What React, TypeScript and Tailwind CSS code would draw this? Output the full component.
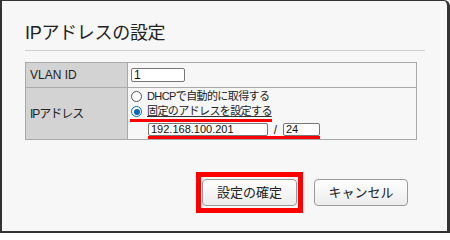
const FONT = "font-['Liberation_Sans','Noto_Sans_CJK_JP',sans-serif]";

function Radio({ checked }: { checked?: boolean }) {
  return checked ? (
    <span className="w-[11px] h-[11px] rounded-full border border-[#0067c0] bg-white flex items-center justify-center shrink-0">
      <span className="w-[6px] h-[6px] rounded-full bg-[#0067c0]" />
    </span>
  ) : (
    <span className="w-[11px] h-[11px] rounded-full border border-[#555] bg-white shrink-0" />
  );
}

function Field({ value, className }: { value: string; className: string }) {
  return (
    <div
      className={`h-[13px] bg-white border border-[#777] rounded-[2px] flex items-center pl-[2px] text-[11px] leading-none text-[#111] ${className}`}
    >
      {value}
    </div>
  );
}

export default function App() {
  return (
    <div className={`w-[450px] h-[233px] bg-white ${FONT}`}>
      <div className="w-full h-full bg-[#f7f7f7] border-t border-l-2 border-r-[3px] border-b-2 border-[#333] rounded-tr-[6px] pt-[22px] pl-[23px] pr-[22px]">
        {/* Title */}
        <div className="border-b border-[#cfcfcf] pb-[6px]">
          <h1 className="text-[18px] leading-[21px] text-[#222] tracking-[-0.3px]">IPアドレスの設定</h1>
        </div>

        {/* Settings table */}
        <div className="w-[392px] mt-[11px] border border-[#a9a9a9] text-[11px] text-[#222]">
          <div className="flex h-[25px] border-b border-[#a9a9a9]">
            <div className="w-[102px] bg-[#d3d3d3] border-r border-[#a9a9a9] flex items-center pl-[4px] text-[12px]">
              VLAN ID
            </div>
            <div className="flex items-center pl-[3px]">
              <Field value="1" className="w-[54px] h-[14px] text-[12px]" />
            </div>
          </div>
          <div className="flex h-[51px]">
            <div className="w-[102px] bg-[#d3d3d3] border-r border-[#a9a9a9] flex items-center pl-[4px] text-[12px] tracking-[-1px]">
              IPアドレス
            </div>
            <div className="flex flex-col items-start pl-[2px] tracking-[-0.6px]">
              <label className="flex items-center gap-[5px] h-[16px] pl-[1px]">
                <Radio />
                <span>DHCPで自動的に取得する</span>
              </label>
              <label className="flex items-center gap-[5px] h-[18px] pl-[1px] border-b-[3px] border-[#ff0000] underline decoration-[#333] underline-offset-[1px]">
                <Radio checked />
                <span>固定のアドレスを設定する</span>
              </label>
              <div className="ml-[18px] mt-[1px] flex items-center border-b-[3px] border-[#ff0000] tracking-normal">
                <Field value="192.168.100.201" className="w-[120px]" />
                <span className="w-[15px] text-center text-[12px] leading-none">/</span>
                <Field value="24" className="w-[37px]" />
              </div>
            </div>
          </div>
        </div>

        {/* Buttons */}
        <div className="flex justify-end items-center gap-[11px] mt-[32px] mr-[17px]">
          <div className="border-[5px] border-[#ff0000] px-[1px] py-[2px]">
            <button className="w-[95px] h-[27px] rounded-[4px] border border-[#9a9a9a] bg-gradient-to-b from-white to-[#ececec] text-[13px] text-[#222]">
              設定の確定
            </button>
          </div>
          <button className="w-[94px] h-[27px] rounded-[4px] border border-[#9a9a9a] bg-gradient-to-b from-white to-[#ececec] text-[13px] text-[#222]">
            キャンセル
          </button>
        </div>
      </div>
    </div>
  );
}
